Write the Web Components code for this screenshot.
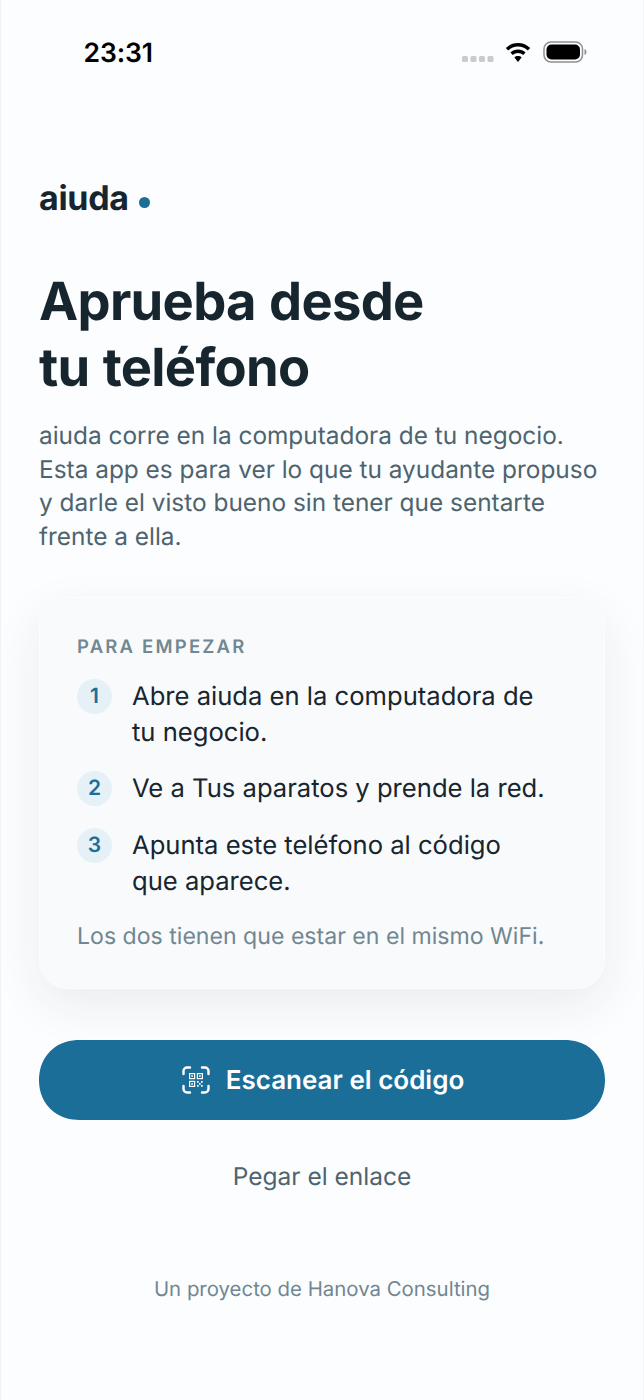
<!DOCTYPE html>
<html lang="es"><head><meta charset="utf-8"><title>aiuda</title>
<style>
html,body{margin:0;padding:0;background:#fcfdfe}
body{font-family:Inter,"Liberation Sans",sans-serif;width:644px;height:1400px;overflow:hidden;text-rendering:geometricPrecision}
</style></head><body>
<app-screen>
  <status-bar slot="status" time="23:31"></status-bar>
  <brand-mark>aiuda</brand-mark>
  <hero-text title-a="Aprueba desde" title-b="tu teléfono">aiuda corre en la computadora de tu negocio.<br>Esta app es para ver lo que tu ayudante propuso<br>y darle el visto bueno sin tener que sentarte<br>frente a ella.</hero-text>
  <steps-card heading="PARA EMPEZAR" note="Los dos tienen que estar en el mismo WiFi.">
    <step-item n="1">Abre aiuda en la computadora de<br>tu negocio.</step-item>
    <step-item n="2">Ve a Tus aparatos y prende la red.</step-item>
    <step-item n="3">Apunta este teléfono al código<br>que aparece.</step-item>
  </steps-card>
  <scan-button>Escanear el código</scan-button>
  <link-button>Pegar el enlace</link-button>
  <foot-note>Un proyecto de Hanova Consulting</foot-note>
</app-screen>
<script>
function def(name,html,init){
  customElements.define(name,class extends HTMLElement{
    connectedCallback(){
      if(this.shadowRoot)return;
      const r=this.attachShadow({mode:'open'});
      r.innerHTML=html;
      if(init)init(this,r);
    }
  });
}
def('app-screen',`<style>
:host{display:flex;flex-direction:column;width:644px;height:1400px;box-sizing:border-box;background:#fcfdfe;border-left:1px solid #f1f2f4;border-right:1px solid #f6f7f8}
</style><slot name="status"></slot><slot></slot>`);
def('status-bar',`<style>
:host{display:flex;align-items:center;height:104px;box-sizing:border-box;color:#000}
.t{font:600 26.500px/32px Inter,sans-serif;margin:1px 0 0 82.500px;letter-spacing:-.1px}
.r{margin-left:auto;margin-right:56px;display:flex;align-items:center}
svg{display:block}
</style><span class="t"></span><div class="r">
<svg width="32" height="8" viewBox="0 0 32 8" style="margin-top:14px"><g fill="#cbcbcd"><rect x="0" y="1" width="6" height="6" rx="1.5"/><rect x="8.500" y="1" width="6" height="6" rx="1.5"/><rect x="17" y="1" width="6" height="6" rx="1.500"/><rect x="25.500" y="1" width="6" height="6" rx="1.500"/></g></svg>
<svg width="26" height="20" viewBox="0 0 26 20" style="margin-left:11px;margin-top:2px"><path d="M13 0C8 0 4 1.900 .8 5l2.400 2.500C6 5 9.300 3.500 13 3.500S20 5 22.800 7.500L25.200 5C22 1.900 18 0 13 0z"/><path d="M13 6.500c-3 0-5.600 1.100-7.600 3l2.400 2.500c1.400-1.300 3.200-2 5.200-2s3.800.7 5.200 2l2.400-2.500c-2-1.900-4.600-3-7.600-3z"/><path d="M13 13c-1.500 0-2.700.5-3.600 1.400L13 19l3.600-4.600C15.700 13.500 14.500 13 13 13z"/></svg>
<svg width="44" height="22" viewBox="0 0 44 22" style="margin-left:12px"><rect x="1" y="1" width="38.500" height="20" rx="7" fill="none" stroke="#8f8f91" stroke-width="1.500"/><rect x="3.500" y="3.500" width="33.500" height="15" rx="5"/><path d="M41.500 8v6c1.300-.4 2-1.600 2-3s-.7-2.600-2-3z" fill="#8f8f91"/></svg>
</div>`,(h,r)=>{r.querySelector('.t').textContent=h.getAttribute('time')});
def('brand-mark',`<style>
:host{display:flex;align-items:center;margin:73px 0 0 38px;height:44px}
.n{font:700 34px/44px Inter,sans-serif;color:#17252e;letter-spacing:-.3px}
.d{width:11px;height:11px;border-radius:50%;background:#1b6e98;margin:6px 0 0 10px}
</style><span class="n"><slot></slot></span><span class="d"></span>`);
def('hero-text',`<style>
:host{display:block;margin:47px 38px 0}
h1{margin:0;font:700 52.500px/66px Inter,sans-serif;color:#17252e;letter-spacing:-.7px;word-spacing:1.500px}
p{margin:19px 0 0;font:400 24.400px/33.700px Inter,sans-serif;color:#4d6470;white-space:nowrap}
</style><h1><span class="a"></span><br><span class="b"></span></h1><p><slot></slot></p>`,(h,r)=>{
r.querySelector('.a').textContent=h.getAttribute('title-a');r.querySelector('.b').textContent=h.getAttribute('title-b')});
def('steps-card',`<style>
:host{display:block;margin:43px 38px 0;box-sizing:border-box;height:392px;padding:37px 37px 0;background:#f9fafc;border:1px solid #fdfdfe;border-radius:28px;box-shadow:0 16px 48px rgba(23,37,46,.08)}
h2{margin:0;font:600 18.500px/24px Inter,sans-serif;letter-spacing:2.200px;color:#718792}
.list{display:flex;flex-direction:column;gap:20.500px;margin-top:20px}
.note{margin-top:20.500px;font:400 23.100px/32px Inter,sans-serif;color:#718792;white-space:nowrap}
</style><h2 class="h"></h2><div class="list"><slot></slot></div><div class="note"></div>`,(h,r)=>{
r.querySelector('.h').textContent=h.getAttribute('heading');r.querySelector('.note').textContent=h.getAttribute('note')});
def('step-item',`<style>
:host{display:flex;gap:20px;align-items:flex-start}
.n{flex:none;width:35px;height:35px;border-radius:50%;background:#e6f1f7;color:#1b6e98;font:600 21px/35px Inter,sans-serif;text-align:center}
.t{font:400 25.600px/36px Inter,sans-serif;color:#17252e;white-space:nowrap}
</style><span class="n"></span><span class="t"><slot></slot></span>`,(h,r)=>{r.querySelector('.n').textContent=h.getAttribute('n')});
def('scan-button',`<style>
:host{display:flex;align-items:center;justify-content:center;gap:16px;margin:51px 38px 0;padding-left:2px;height:80px;border-radius:40px;corner-shape:superellipse(1.08);background:#1b6e98;color:#fff;font:600 26px/32px Inter,sans-serif}
svg{display:block}
span{padding-top:2px}
</style><svg width="28" height="28" viewBox="0 0 28 28" fill="none"><path d="M1.500 8V5a3.500 3.500 0 0 1 3.500-3.500h3M20 1.500h3A3.500 3.500 0 0 1 26.500 5v3M26.500 20v3a3.500 3.500 0 0 1-3.500 3.500h-3M8 26.500H5A3.500 3.500 0 0 1 1.500 23v-3" stroke="#fff" stroke-width="2.400" stroke-linecap="round"/><g stroke="#fff" stroke-width="1.200"><rect x="7.600" y="7.600" width="5" height="5"/><rect x="15.400" y="7.600" width="5" height="5"/><rect x="7.600" y="15.400" width="5" height="5"/></g><g fill="#fff"><rect x="9.300" y="9.300" width="1.600" height="1.600"/><rect x="17.100" y="9.300" width="1.600" height="1.600"/><rect x="9.300" y="17.100" width="1.600" height="1.600"/><rect x="15" y="15" width="1.700" height="1.700"/><rect x="19" y="15" width="1.700" height="1.700"/><rect x="17" y="17" width="1.700" height="1.700"/><rect x="15" y="19" width="1.700" height="1.700"/><rect x="19" y="19" width="1.700" height="1.700"/></g></svg><span><slot></slot></span>`);
def('link-button',`<style>
:host{display:block;margin-top:40px;text-align:center;font:400 24.500px/32px Inter,sans-serif;color:#4d6470}
</style><slot></slot>`);
def('foot-note',`<style>
:host{display:block;margin-top:83px;text-align:center;font:400 20.400px/28px Inter,sans-serif;color:#718792}
</style><slot></slot>`);
</script>
</body></html>
